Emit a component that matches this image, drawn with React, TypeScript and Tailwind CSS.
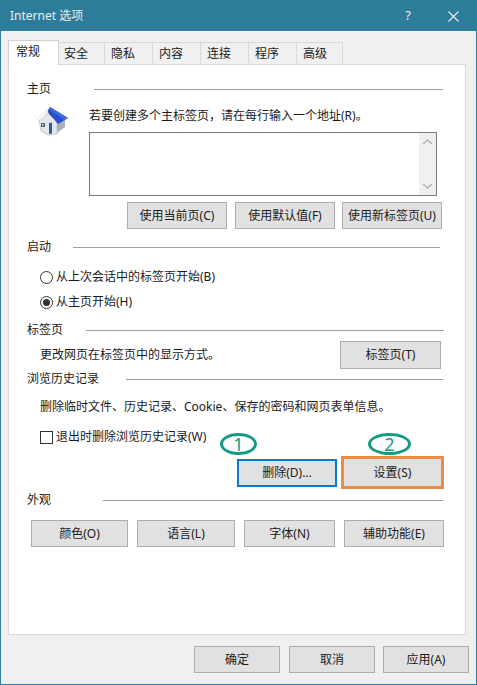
import { ReactNode } from "react";

const tabs = ["安全", "隐私", "内容", "连接", "程序"];

function Btn({ w, h = "h-[27px]", className = "", children }: { w: string; h?: string; className?: string; children: ReactNode }) {
  return (
    <button className={`${w} ${h} flex items-center justify-center border border-[#adadad] bg-[#e1e1e1] text-[12px] text-[#1a1a1a] ${className}`}>
      {children}
    </button>
  );
}

function Section({ label, line, mt, lineEnd = "pr-[23px]" }: { label: string; line: string; mt: string; lineEnd?: string }) {
  return (
    <div className={`flex h-[16px] items-center pl-[18px] ${lineEnd} ${mt}`}>
      <span className={`${line} shrink-0 text-[12px] leading-[16px] text-[#1a1a1a]`}>{label}</span>
      <div className="h-px flex-1 bg-[#a0a0a0]" />
    </div>
  );
}

function HouseIcon() {
  return (
    <svg width="33" height="31" viewBox="0 0 33 31">
      {/* side wall */}
      <path d="M21 18 L29 13 L29 22 L21 28 Z" fill="#a9b1bb" />
      {/* front gable */}
      <path d="M3 15 L12 6 L21 18 L21 29 L12 30 L5 26 Z" fill="#e3e7ec" stroke="#aab2bc" strokeWidth="0.6" />
      {/* window and door */}
      <rect x="5" y="18" width="4" height="4" fill="#56616e" />
      <rect x="6" y="19" width="1.5" height="1.5" fill="#eef2f6" />
      <path d="M13 18 L16 17.5 L16 28.5 L13 29 Z" fill="#2c5e9f" />
      {/* roof */}
      <path d="M1 14 L12 4 L22 19 L21 18 L12 7 L3 16 Z" fill="#fafbfc" stroke="#b5bcc5" strokeWidth="0.4" />
      <path d="M14 2 L32 13 L22 19 L11.5 6 Z" fill="#2a4fcb" />
      <path d="M14 2 L32 13 L28 15 L13 4 Z" fill="#3f68e4" />
      <path d="M12 6 L22 19 L19 15 L13 9 Z" fill="#1b3597" />
    </svg>
  );
}

function Radio({ checked, children, mt }: { checked?: boolean; children: ReactNode; mt: string }) {
  return (
    <div className={`flex h-[16px] items-center pl-[31px] text-[12px] text-[#1a1a1a] ${mt}`}>
      <span className="flex h-[13px] w-[13px] items-center justify-center rounded-full border border-[#333333] bg-white">
        {checked && <span className="h-[7px] w-[7px] rounded-full bg-[#333333]" />}
      </span>
      <span className="ml-[3px]">{children}</span>
    </div>
  );
}

export default function App() {
  return (
    <div
      className="flex h-[685px] w-[477px] flex-col overflow-hidden border border-[#2f7f9b] bg-[#f0f0f0]"
      style={{ fontFamily: '"Noto Sans", "Noto Sans CJK SC", sans-serif' }}
    >
      <div className="flex h-[30px] shrink-0 items-center bg-[#2d7d9a] pl-[9px] text-[12px] text-[#e4f0f4]">
        <span>Internet 选项</span>
        <span className="ml-auto mr-[37px] text-[13px] text-[#e8f2f5]">?</span>
        <svg className="mr-[17px]" width="11" height="11" viewBox="0 0 11 11">
          <path d="M0.5 0.5 L10.5 10.5 M10.5 0.5 L0.5 10.5" stroke="#e8f2f5" strokeWidth="1.1" fill="none" />
        </svg>
      </div>

      <div className="mt-[9px] flex h-[24px] items-end pl-[7px]">
        <div className="z-10 mb-[-1px] flex h-[25px] w-[51px] items-start border border-b-0 border-[#d0d0d0] bg-white pl-[7px] pt-[2px] text-[12px] text-[#1a1a1a]">
          常规
        </div>
        {tabs.map((t, i) => (
          <div
            key={t}
            className={`flex h-[22px] items-center border-r border-t border-[#d9d9d9] bg-[#f0f0f0] pt-[1px] text-[12px] text-[#1a1a1a] ${i === 0 ? "w-[46px] pl-[5px]" : "w-[48px] pl-[6px]"}`}
          >
            {t}
          </div>
        ))}
        <div className="flex h-[22px] w-[46px] items-center border-r border-t border-[#d9d9d9] bg-[#f0f0f0] pl-[6px] pt-[1px] text-[12px] text-[#1a1a1a]">
          高级
        </div>
      </div>

      <div className="relative ml-[7px] h-[571px] w-[458px] border border-[#d9d9d9] bg-white">
        <Section label="主页" line="w-[67px]" mt="mt-[16px]" lineEnd="pr-[22px]" />

        <div className="mt-[11px] flex pl-[27px]">
          <div className="mt-[-3px] w-[53px] shrink-0">
            <HouseIcon />
          </div>
          <div className="flex-1">
            <div className="h-[16px] text-[12px] leading-[16px] text-[#1a1a1a]">若要创建多个主标签页，请在每行输入一个地址(R)。</div>
            <div className="mt-[8px] flex h-[64px] w-[348px] justify-end border border-[#7a7a7a] bg-white">
              <div className="flex w-[17px] flex-col justify-between bg-[#f0f0f0] py-[5px]">
                <svg width="17" height="8" viewBox="0 0 17 8"><path d="M4 6 L8.5 2 L13 6" stroke="#b5b5b5" strokeWidth="1.6" fill="none" /></svg>
                <svg width="17" height="8" viewBox="0 0 17 8"><path d="M4 2 L8.5 6 L13 2" stroke="#b5b5b5" strokeWidth="1.6" fill="none" /></svg>
              </div>
            </div>
          </div>
        </div>

        <div className="mt-[6px] flex pl-[118px]">
          <Btn w="w-[100px]">使用当前页(C)</Btn>
          <Btn w="w-[100px]" className="ml-[8px]">使用默认值(F)</Btn>
          <Btn w="w-[100px]" className="ml-[7px]">使用新标签页(U)</Btn>
        </div>

        <Section label="启动" line="w-[46px]" mt="mt-[10px]" lineEnd="pr-[25px]" />
        <Radio mt="mt-[14px]">从上次会话中的标签页开始(B)</Radio>
        <Radio checked mt="mt-[9px]">从主页开始(H)</Radio>

        <Section label="标签页" line="w-[59px]" mt="mt-[12px]" lineEnd="pr-[21px]" />
        <div className="mt-[3px] flex h-[28px] items-center pl-[31px]">
          <span className="text-[12px] text-[#1a1a1a]">更改网页在标签页中的显示方式。</span>
          <Btn w="w-[101px]" h="h-[28px]" className="ml-auto mr-[24px]">标签页(T)</Btn>
        </div>

        <Section label="浏览历史记录" line="w-[99px]" mt="mt-[2px]" lineEnd="pr-[22px]" />
        <div className="mt-[12px] h-[16px] pl-[31px] text-[12px] leading-[16px] text-[#1a1a1a]">
          删除临时文件、历史记录、Cookie、保存的密码和网页表单信息。
        </div>
        <div className="mt-[14px] flex h-[16px] items-center pl-[31px] text-[12px] text-[#1a1a1a]">
          <span className="h-[13px] w-[13px] border border-[#333333] bg-white" />
          <span className="ml-[3px]">退出时删除浏览历史记录(W)</span>
        </div>

        <div className="mt-[11px] flex items-center pl-[228px]">
          <Btn w="w-[100px]" h="h-[28px]" className="!border-2 !border-[#0f79c9]">删除(D)...</Btn>
          <Btn w="w-[103px]" h="h-[33px]" className="ml-[4px] !border-[3px] !border-[#ec8c45]">设置(S)</Btn>
        </div>

        <Section label="外观" line="w-[76px]" mt="mt-[3px]" lineEnd="pr-[22px]" />
        <div className="mt-[12px] flex pl-[22px]">
          <Btn w="w-[97px]">颜色(O)</Btn>
          <Btn w="w-[98px]" className="ml-[9px]">语言(L)</Btn>
          <Btn w="w-[91px]" className="ml-[9px]">字体(N)</Btn>
          <Btn w="w-[100px]" className="ml-[9px]">辅助功能(E)</Btn>
        </div>

        <div className="absolute left-[211px] top-[368px] flex h-[22px] w-[37px] items-center justify-center rounded-[50%] border-[3px] border-[#169b83] text-[18px] leading-none text-[#169b83]">1</div>
        <div className="absolute left-[359px] top-[368px] flex h-[22px] w-[43px] items-center justify-center rounded-[50%] border-[3px] border-[#169b83] text-[18px] leading-none text-[#169b83]">2</div>
      </div>

      <div className="mt-[11px] flex pl-[193px]">
        <Btn w="w-[86px]">确定</Btn>
        <Btn w="w-[86px]" className="ml-[9px]">取消</Btn>
        <Btn w="w-[86px]" className="ml-[8px]">应用(A)</Btn>
      </div>
    </div>
  );
}
